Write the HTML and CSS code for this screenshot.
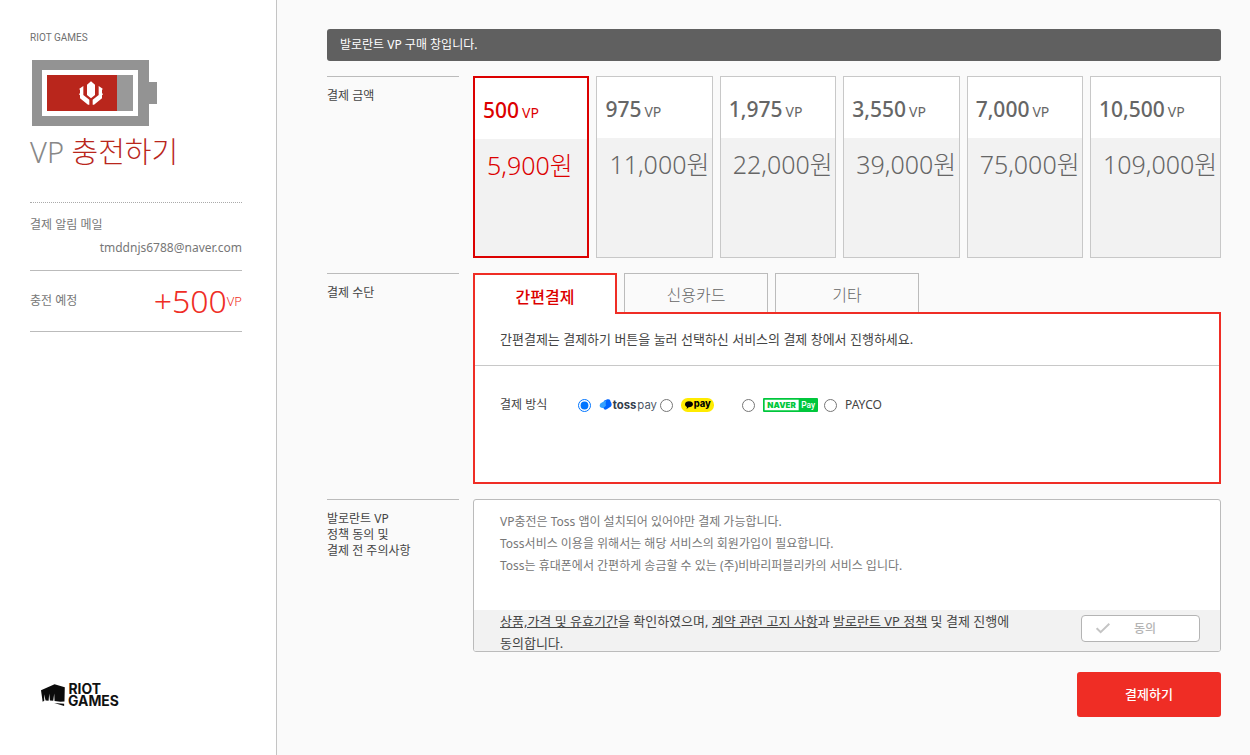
FILE: index.html
```
<!DOCTYPE html>
<html lang="ko">
<head>
<meta charset="utf-8">
<title>VP 충전하기</title>
<link rel="stylesheet" href="styles.css">
</head>
<body>
<div class="page">
  <aside class="side">
    <p class="brand">RIOT GAMES</p>
    <svg class="battery" viewBox="0 0 375 198" aria-hidden="true">
      <path fill="#939393" d="M0 0h351v66h24v66h-24v66H0z"/>
      <path fill="#fff" d="M30 30h288v138H30z"/>
      <path fill="#999" d="M255 45h48v108h-48z"/>
      <path fill="#b9261c" d="M45 45h210v108H45z"/>
      <path fill="#fff" d="M177 64l12 10v31l-12 10-12-10V74zM154 78v27l18 14v15h-4l-24-19v-9l-3-3 3-4v-8l-2-5zM200 78v27l-18 14v15h4l24-19v-9l3-3-3-4v-8l2-5z"/>
    </svg>
    <h1 class="title">VP <strong>충전하기</strong></h1>
    <dl class="mail">
      <dt>결제 알림 메일</dt>
      <dd>tmddnjs6788@naver.com</dd>
    </dl>
    <dl class="charge">
      <dt>충전 예정</dt>
      <dd>+500<small>VP</small></dd>
    </dl>
    <svg class="riot" viewBox="0 0 236 68" role="img" aria-label="RIOT GAMES">
      <path fill="#0b0b0b" d="M0 18L41 0l31 9-1 43-12 1-18-2-1-23-3 22-10-1-2-21-2 22-9-1-5-19 1 20-5 3zM40 57l30 2v7z"/>
      <text class="riot-text" x="83" y="30">RIOT</text>
      <text class="riot-text" x="82" y="66">GAMES</text>
    </svg>
  </aside>

  <main class="main">
    <p class="notice">발로란트 VP 구매 창입니다.</p>

    <section class="row">
      <h2 class="label">결제 금액</h2>
      <div class="cards">
        <button type="button" class="card card-on"><span class="vp"><b>500</b><span>VP</span></span><span class="price">5,900원</span></button>
        <button type="button" class="card"><span class="vp"><b>975</b><span>VP</span></span><span class="price">11,000원</span></button>
        <button type="button" class="card"><span class="vp"><b>1,975</b><span>VP</span></span><span class="price">22,000원</span></button>
        <button type="button" class="card"><span class="vp"><b>3,550</b><span>VP</span></span><span class="price">39,000원</span></button>
        <button type="button" class="card"><span class="vp"><b>7,000</b><span>VP</span></span><span class="price">75,000원</span></button>
        <button type="button" class="card"><span class="vp"><b>10,500</b><span>VP</span></span><span class="price">109,000원</span></button>
      </div>
    </section>

    <section class="row">
      <h2 class="label">결제 수단</h2>
      <div class="method">
        <div class="tabs">
          <button type="button" class="tab tab-on">간편결제</button>
          <button type="button" class="tab">신용카드</button>
          <button type="button" class="tab">기타</button>
        </div>
        <div class="panel">
          <p class="guide">간편결제는 결제하기 버튼을 눌러 선택하신 서비스의 결제 창에서 진행하세요.</p>
          <div class="ways">
            <span class="ways-name">결제 방식</span>
            <label class="way"><input type="radio" name="way" checked>
              <svg class="toss" viewBox="0 0 174 42" role="img" aria-label="toss pay">
                <path fill="#0064ff" d="M15 8l10-4q9-2 10 7 3 3 3 10 0 5-8 8l-7 5q-7 4-9-3L10 29z"/>
                <path fill="#35a0ff" d="M2 22q0-6 8-9l13-6q-3 3-3 9 0 4 1 7l-8 7Q2 31 2 22z"/>
                <text class="toss-bold" x="41" y="33">toss</text>
                <text class="toss-thin" x="115" y="33">pay</text>
              </svg></label>
            <label class="way"><input type="radio" name="way">
              <svg class="kakao" viewBox="0 0 99 42" role="img" aria-label="kakao pay">
                <rect width="99" height="42" rx="20" fill="#ffeb00"/>
                <path d="M24 10c7 0 12 4 12 9 0 6-6 9-13 9l-6 5 1-6c-4-2-6-4-6-8 0-5 5-9 12-9z"/>
                <text class="kakao-text" x="38" y="27">pay</text>
              </svg></label>
            <label class="way"><input type="radio" name="way">
              <svg class="naver" viewBox="0 0 165 42" role="img" aria-label="NAVER Pay">
                <rect width="165" height="42" rx="3" fill="#00c73c"/>
                <path fill="#fff" d="M5 5h102v32H5z"/>
                <text class="naver-text" x="13" y="29">NAVER</text>
                <text class="naver-pay" x="115" y="30">Pay</text>
              </svg></label>
            <label class="way"><input type="radio" name="way">PAYCO</label>
          </div>
        </div>
      </div>
    </section>

    <section class="row">
      <h2 class="label">발로란트 VP<br>정책 동의 및<br>결제 전 주의사항</h2>
      <div class="terms">
        <p class="terms-text">VP충전은 Toss 앱이 설치되어 있어야만 결제 가능합니다.<br>Toss서비스 이용을 위해서는 해당 서비스의 회원가입이 필요합니다.<br>Toss는 휴대폰에서 간편하게 송금할 수 있는 (주)비바리퍼블리카의 서비스 입니다.</p>
        <div class="agree">
          <p class="agree-text"><a href="#">상품,가격 및 유효기간</a>을 확인하였으며, <a href="#">계약 관련 고지 사항</a>과 <a href="#">발로란트 VP 정책</a> 및 결제 진행에 동의합니다.</p>
          <button type="button" class="agree-btn">
            <svg class="check" viewBox="0 0 42 32" aria-hidden="true"><path fill="none" stroke="#c4c4c4" stroke-width="6" d="M2 15l12 12L40 2"/></svg>
            <span>동의</span>
          </button>
        </div>
      </div>
    </section>

    <button type="button" class="pay">결제하기</button>
  </main>
</div>
</body>
</html>
```
FILE: styles.css
```
* { box-sizing: border-box; }
body, p, h1, h2, dl, dd { margin: 0; }
body {
  background: #fafafa;
  color: #444;
  font: 12px/16px "Noto Sans", "Noto Sans CJK KR", sans-serif;
}
button { margin: 0; padding: 0; font: inherit; color: inherit; cursor: pointer; }
svg { display: block; flex: none; }

.page { display: flex; min-height: 100vh; }

.side {
  display: flex;
  flex-direction: column;
  flex: none;
  width: 277px;
  padding: 30px 34px 48px 30px;
  background: #fff;
  border-right: 1px solid #c4c4c4;
  color: #777;
}
.brand { font: 400 10px/16px Roboto, sans-serif; color: #707070; }
.battery { width: 125px; height: 66px; margin: 14px 0 0 2px; }
.title {
  margin: 6px 0 30px;
  font-size: 29px;
  line-height: 40px;
  font-weight: 300;
  color: #888;
}
.title strong { font-weight: 300; color: #b9261c; }
.mail { padding: 13px 0 12px; border-top: 1px dotted #aaa; }
.mail dt { line-height: 18px; }
.mail dd { margin-top: 4px; line-height: 20px; text-align: right; }
.charge {
  display: flex;
  justify-content: space-between;
  align-items: center;
  height: 62px;
  border: solid #bbb;
  border-width: 1px 0;
}
.charge dd { font-size: 32px; line-height: 40px; font-weight: 300; color: #ef2d25; display: flex; align-items: center; }
.charge small { font-size: 13px; }
.riot { width: 78px; height: 23px; margin: auto 0 0 11px; overflow: visible; }
.riot-text { font: 700 42px Inter, sans-serif; fill: #111; }

.main { flex: 1; min-width: 0; padding: 29px 29px 38px 50px; }
.notice {
  padding: 6px 13px;
  line-height: 20px;
  background: #606060;
  border-radius: 3px;
  color: #fff;
}
.row { display: flex; gap: 14px; margin-top: 15px; }
.label {
  flex: none;
  width: 132px;
  padding-top: 11px;
  border-top: 1px solid #bbb;
  font-size: 12px;
  line-height: 16px;
  font-weight: 400;
}

.cards {
  flex: 1;
  display: grid;
  grid-template-columns: repeat(5, minmax(0, 8fr)) minmax(0, 9fr);
  gap: 7px;
}
.card {
  display: flex;
  flex-direction: column;
  height: 182px;
  background: #f2f2f2;
  border: 1px solid #c8c8c8;
  color: #666;
  text-align: left;
  white-space: nowrap;
}
.vp {
  display: flex;
  align-items: baseline;
  gap: 3px;
  align-self: stretch;
  height: 61px;
  padding: 18px 0 0 8px;
  background: #fff;
  font-size: 14px;
  line-height: 28px;
}
.vp b { font-size: 21px; font-weight: 500; }
.price { padding: 8px 0 0 12px; font-size: 25px; line-height: 36px; font-weight: 300; }
.card-on { border: 2px solid #dc0000; color: #dc0000; }

.method { flex: 1; }
.tabs { display: flex; gap: 7px; position: relative; align-items: flex-start; }
.tab {
  width: 144px;
  height: 39px;
  padding-top: 4px;
  background: #fafafa;
  border: 1px solid #bbb;
  border-bottom: 0;
  font-size: 16px;
  font-weight: 300;
  color: #666;
}
.tab-on {
  height: 41px;
  margin-bottom: -2px;
  background: #fff;
  border: 2px solid #ef2d25;
  border-bottom: 0;
  font-weight: 500;
  color: #dc0000;
}
.panel { min-height: 172px; background: #fff; border: 2px solid #ef2d25; }
.guide {
  padding: 15px 25px 16px;
  border-bottom: 1px solid #c8c8c8;
  font-size: 13px;
  line-height: 20px;
}
.ways { display: flex; padding: 28px 25px; align-items: center; }
.ways-name { width: 78px; }
.way { display: flex; align-items: center; gap: 8px; width: 82px; height: 22px; white-space: nowrap; }
.way input { flex: none; width: 13px; height: 13px; margin: 0; }
.toss { width: 58px; height: 14px; }
.toss-bold { font: 700 34px Inter, sans-serif; fill: #333d4b; }
.toss-thin { font: 400 34px Inter, sans-serif; fill: #4e5968; }
.kakao { width: 33px; height: 14px; }
.kakao-text { font: 800 28px Inter, sans-serif; }
.naver { width: 55px; height: 14px; }
.naver-text { font: 900 24px Inter, sans-serif; fill: #00c73c; }
.naver-pay { font: 500 25px Roboto, sans-serif; fill: #fff; }

.terms {
  flex: 1;
  overflow: hidden;
  background: #fff;
  border: 1px solid #bbb;
  border-radius: 3px;
}
.terms-text { height: 110px; padding: 11px 26px; line-height: 22px; color: #777; }
.agree {
  display: flex;
  justify-content: space-between;
  height: 41px;
  padding-right: 20px;
  background: #f2f2f2;
}
.agree-text { width: 560px; padding-left: 26px; font-size: 13px; line-height: 22px; word-break: keep-all; }
.agree-text a { color: inherit; }
.agree-btn {
  display: flex;
  align-items: center;
  width: 119px;
  height: 27px;
  margin-top: 5px;
  padding-left: 14px;
  gap: 24px;
  background: #fff;
  border: 1px solid #b4b4b4;
  border-radius: 4px;
  font-weight: 500;
  color: #b4b4b4;
}
.check { width: 14px; height: 11px; }
.pay {
  display: block;
  width: 144px;
  height: 45px;
  margin: 20px 0 0 auto;
  padding-bottom: 2px;
  background: #ef2d25;
  border: 0;
  border-radius: 3px;
  font-size: 13px;
  font-weight: 500;
  color: #fff;
}
```
